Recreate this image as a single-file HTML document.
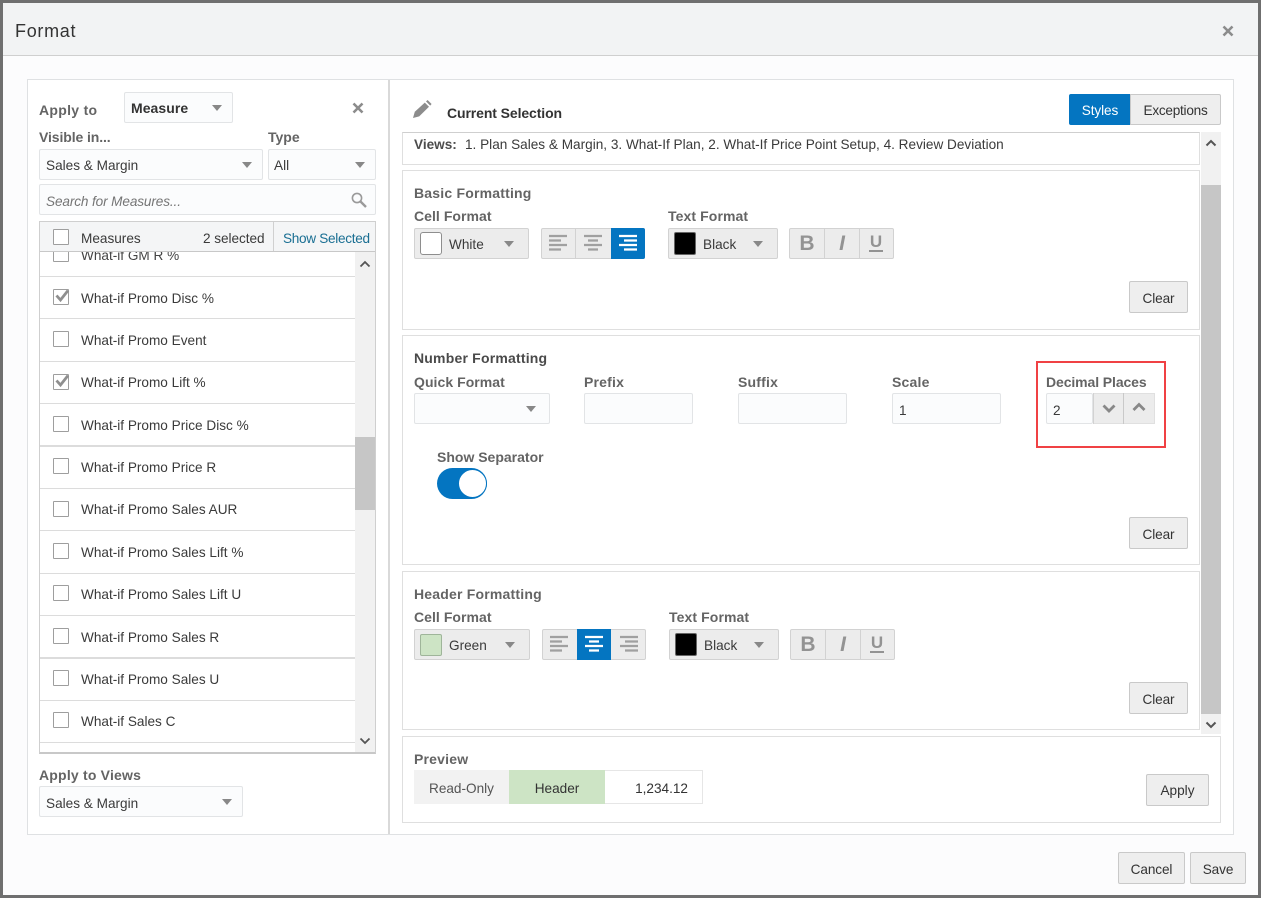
<!DOCTYPE html>
<html><head><meta charset="utf-8"><title>Format</title>
<style>
html,body{margin:0;padding:0}
body{width:1261px;height:898px;position:relative;overflow:hidden;background:#6f6f6f;font-family:"Liberation Sans",sans-serif;font-size:13.6px;color:#3a3a3a}
div,span.a{position:absolute;box-sizing:border-box}
svg{position:absolute;overflow:visible}
.t{white-space:nowrap;line-height:20px}
.b{font-weight:bold;color:#646464;font-size:14px;line-height:18px}
.box{background:#fff;border:1px solid #dfdfdf}
.sel{background:#fbfcfd;border:1px solid #e2e4e6;border-radius:2px}
.btn{background:#eeeeee;border:1px solid #c9c9c9;border-radius:2px;text-align:center;line-height:34px;color:#333;letter-spacing:-.1px}
.g{background:#ececec;border:1px solid #d2d2d2}
.row{left:40px;width:315px;height:1px;background:#dcdcdc}
.cb{left:53px;width:16px;height:16px;border:1px solid #9e9e9e;background:#fff;border-radius:1px}
.tri{width:0;height:0;border-left:5.5px solid transparent;border-right:5.5px solid transparent;border-top:6.5px solid #888;margin-left:.5px}
.B{font-weight:bold;font-size:21px;line-height:24px;color:#939393;width:18px;text-align:center}
.I{font-weight:bold;font-style:italic;font-size:21px;line-height:24px;color:#939393;width:18px;text-align:center}
.U{font-weight:bold;font-size:17px;line-height:20px;color:#939393;width:16px;text-align:center}
.ul{width:14px;height:2px;background:#939393}
</style></head><body>
<div style="left:3px;top:3px;width:1255px;height:892px;background:#fcfcfd"></div>
<div style="left:3px;top:3px;width:1255px;height:53px;background:#f2f3f4;border-bottom:1px solid #cfcfcf"></div>
<div class="t" style="left:15px;top:19px;font-size:18px;line-height:24px;color:#333;letter-spacing:.7px">Format</div>
<svg style="left:1222px;top:25px" width="12" height="12"><path d="M1.5 1.5L10.5 10.5M10.500 1.5L1.5 10.5" stroke="#8c8c8c" stroke-width="2.6"/></svg>

<div style="left:27px;top:79px;width:1207px;height:756px;background:#fff;border:1px solid #dfe1e3"></div>
<div style="left:388px;top:80px;width:2px;height:754px;background:#d9d9d9"></div>

<!-- left panel -->
<div class="t b" style="left:39px;top:101px;letter-spacing:.3px">Apply to</div>
<div class="sel" style="left:124px;top:92px;width:109px;height:31px"></div>
<div class="t" style="left:131px;top:99px;font-weight:bold;font-size:14px;line-height:18px;color:#333;letter-spacing:.05px">Measure</div>
<div class="tri" style="left:211px;top:105px"></div>
<svg style="left:352px;top:102px" width="12" height="12"><path d="M1.5 1.5L10.5 10.5M10.500 1.5L1.5 10.5" stroke="#8c8c8c" stroke-width="2.6"/></svg>
<div class="t b" style="left:39px;top:128px;letter-spacing:-.1px">Visible in...</div>
<div class="t b" style="left:268px;top:128px">Type</div>
<div class="sel" style="left:39px;top:149px;width:224px;height:31px"></div>
<div class="t" style="left:46px;top:156px">Sales &amp; Margin</div>
<div class="tri" style="left:241px;top:162px"></div>
<div class="sel" style="left:268px;top:149px;width:108px;height:31px"></div>
<div class="t" style="left:274px;top:156px">All</div>
<div class="tri" style="left:354px;top:162px"></div>
<div class="sel" style="left:39px;top:184px;width:337px;height:31px"></div>
<div class="t" style="left:46px;top:192px;font-style:italic;color:#757575;letter-spacing:-.12px">Search for Measures...</div>
<svg style="left:351px;top:192px" width="16" height="16"><circle cx="6" cy="6" r="4.6" fill="none" stroke="#9a9a9a" stroke-width="1.6"/><path d="M9.5 9.5L15 15" stroke="#9a9a9a" stroke-width="2.4"/></svg>

<div style="left:39px;top:221px;width:337px;height:533px;background:#fff;border:1px solid #cfcfcf;border-bottom:2px solid #c8c8c8"></div>
<div class="t" style="left:81px;top:246px;color:#444">What-if GM R %</div>
<div class="cb" style="top:246px"></div>
<div style="left:40px;top:222px;width:335px;height:30px;background:#f4f5f6;border-bottom:1px solid #c8c8c8"></div>
<div style="left:273px;top:222px;width:1px;height:29px;background:#d0d0d0"></div>
<div class="cb" style="top:229px"></div>
<div class="t" style="left:81px;top:229px">Measures</div>
<div class="t" style="left:203px;top:229px;letter-spacing:-.05px">2 selected</div>
<div class="t" style="left:283px;top:229px;color:#1a6f93;letter-spacing:-.3px">Show Selected</div>

<div class="row" style="top:276px"></div>
<div class="row" style="top:318px"></div>
<div class="row" style="top:361px"></div>
<div class="row" style="top:403px"></div>
<div class="row" style="top:445px;height:2px"></div>
<div class="row" style="top:488px"></div>
<div class="row" style="top:530px"></div>
<div class="row" style="top:573px"></div>
<div class="row" style="top:615px"></div>
<div class="row" style="top:657px;height:2px"></div>
<div class="row" style="top:700px"></div>
<div class="row" style="top:742px"></div>

<div class="cb" style="top:289px"></div><svg style="left:53px;top:287px" width="18" height="18"><path d="M3.5 8.500L7.500 13L15 3.500" fill="none" stroke="#8f8f8f" stroke-width="2.800"/></svg>
<div class="t" style="left:81px;top:289px">What-if Promo Disc %</div>
<div class="cb" style="top:331px"></div><div class="t" style="left:81px;top:331px">What-if Promo Event</div>
<div class="cb" style="top:374px"></div><svg style="left:53px;top:372px" width="18" height="18"><path d="M3.5 8.500L7.500 13L15 3.500" fill="none" stroke="#8f8f8f" stroke-width="2.800"/></svg>
<div class="t" style="left:81px;top:373px">What-if Promo Lift %</div>
<div class="cb" style="top:416px"></div><div class="t" style="left:81px;top:416px">What-if Promo Price Disc %</div>
<div class="cb" style="top:458px"></div><div class="t" style="left:81px;top:458px">What-if Promo Price R</div>
<div class="cb" style="top:501px"></div><div class="t" style="left:81px;top:500px">What-if Promo Sales AUR</div>
<div class="cb" style="top:543px"></div><div class="t" style="left:81px;top:543px">What-if Promo Sales Lift %</div>
<div class="cb" style="top:585px"></div><div class="t" style="left:81px;top:585px">What-if Promo Sales Lift U</div>
<div class="cb" style="top:628px"></div><div class="t" style="left:81px;top:628px">What-if Promo Sales R</div>
<div class="cb" style="top:670px"></div><div class="t" style="left:81px;top:670px">What-if Promo Sales U</div>
<div class="cb" style="top:712px"></div><div class="t" style="left:81px;top:712px">What-if Sales C</div>

<div style="left:355px;top:252px;width:20px;height:500px;background:#f1f1f1"></div>
<div style="left:355px;top:437px;width:20px;height:73px;background:#c6c6c6"></div>
<svg style="left:359px;top:260px" width="12" height="8"><path d="M1.5 6.5L6 2L10.500 6.5" fill="none" stroke="#555" stroke-width="1.8"/></svg>
<svg style="left:359px;top:737px" width="12" height="8"><path d="M1.5 1.5L6 6L10.500 1.5" fill="none" stroke="#555" stroke-width="1.8"/></svg>

<div class="t b" style="left:39px;top:766px;letter-spacing:.2px">Apply to Views</div>
<div class="sel" style="left:39px;top:786px;width:204px;height:31px"></div>
<div class="t" style="left:46px;top:794px">Sales &amp; Margin</div>
<div class="tri" style="left:221px;top:799px"></div>

<!-- right head -->
<svg style="left:412px;top:99px" width="20" height="20"><path d="M1 19L2.800 12.800L12.800 3.600L17 7.800L7.200 17.400Z" fill="#8c8c8c"/><path d="M14 2.400L15.600 1L19.600 5L18.200 6.600Z" fill="#8c8c8c"/></svg>
<div class="t" style="left:447px;top:104px;font-weight:bold;font-size:14px;line-height:18px;color:#333;letter-spacing:-.1px">Current Selection</div>
<div style="left:1069px;top:94px;width:62px;height:31px;background:#0475c1;color:#fff;text-align:center;line-height:33px;border-radius:2px 0 0 2px;letter-spacing:-.1px">Styles</div>
<div style="left:1130px;top:94px;width:91px;height:31px;background:#eeeeee;border:1px solid #c9c9c9;border-radius:0 2px 2px 0;color:#333;text-align:center;line-height:31px;letter-spacing:-.25px">Exceptions</div>

<!-- views -->
<div style="left:402px;top:132px;width:798px;height:33px;background:#fff;border:1px solid #dfdfdf;border-top:1px solid #cfcfcf"></div>
<div class="t" style="left:414px;top:135px;font-weight:bold;color:#4c4c4c">Views:</div>
<div class="t" style="left:465px;top:135px">1. Plan Sales &amp; Margin, 3. What-If Plan, 2. What-If Price Point Setup, 4. Review Deviation</div>

<!-- right scrollbar -->
<div style="left:1201px;top:132px;width:20px;height:602px;background:#f1f1f1"></div>
<div style="left:1201px;top:185px;width:20px;height:529px;background:#c6c6c6"></div>
<svg style="left:1205px;top:139px" width="12" height="8"><path d="M1.500 6.500L6 2L10.500 6.500" fill="none" stroke="#555" stroke-width="2"/></svg>
<svg style="left:1205px;top:721px" width="12" height="8"><path d="M1.500 1.500L6 6L10.500 1.500" fill="none" stroke="#555" stroke-width="2"/></svg>

<!-- basic -->
<div class="box" style="left:402px;top:170px;width:798px;height:160px"></div>
<div class="t b" style="left:414px;top:184px;letter-spacing:.2px">Basic Formatting</div>
<div class="t b" style="left:414px;top:207px;letter-spacing:.05px">Cell Format</div>
<div class="t b" style="left:668px;top:207px;letter-spacing:.1px">Text Format</div>
<div class="g" style="left:414px;top:228px;width:115px;height:31px;border-radius:2px"></div>
<div style="left:420px;top:232px;width:22px;height:23px;background:#fff;border:1px solid #8e8e8e;border-radius:3px"></div>
<div class="t" style="left:449px;top:235px">White</div>
<div class="tri" style="left:503px;top:241px"></div>
<div class="g" style="left:541px;top:228px;width:104px;height:31px;border-radius:2px"></div>
<div style="left:575px;top:229px;width:1px;height:29px;background:#d2d2d2"></div>
<div style="left:611px;top:228px;width:34px;height:31px;background:#0475c1;border-radius:0 2px 2px 0"></div>
<svg style="left:549px;top:235px" width="18" height="17"><path d="M0 1H18M0 5.500H12M0 10H18M0 14.500H12" stroke="#a0a0a0" stroke-width="2.200"/></svg>
<svg style="left:584px;top:235px" width="18" height="17"><path d="M0 1H18M4 5.500H14M0 10H18M4 14.500H14" stroke="#a0a0a0" stroke-width="2.200"/></svg>
<svg style="left:619px;top:235px" width="18" height="17"><path d="M0 1H18M5 5.500H18M0 10H18M5 14.500H18" stroke="#fff" stroke-width="2.200"/></svg>
<div class="g" style="left:668px;top:228px;width:110px;height:31px;border-radius:2px"></div>
<div style="left:674px;top:232px;width:22px;height:23px;background:#000;border:1px solid #666;border-radius:2px"></div>
<div class="t" style="left:703px;top:235px">Black</div>
<div class="tri" style="left:752px;top:241px"></div>
<div class="g" style="left:789px;top:228px;width:105px;height:31px;border-radius:2px"></div>
<div style="left:824px;top:229px;width:1px;height:29px;background:#d2d2d2"></div>
<div style="left:859px;top:229px;width:1px;height:29px;background:#d2d2d2"></div>
<div class="t B" style="left:798px;top:232px">B</div>
<div class="t I" style="left:833px;top:232px">I</div>
<div class="t U" style="left:868px;top:232px">U</div>
<div class="ul" style="left:869px;top:250px"></div>
<div class="btn" style="left:1129px;top:281px;width:59px;height:32px">Clear</div>

<!-- number -->
<div class="box" style="left:402px;top:335px;width:798px;height:230px"></div>
<div class="t" style="left:414px;top:349px;font-weight:bold;font-size:14px;line-height:18px;color:#4a4a4a;letter-spacing:.2px">Number Formatting</div>
<div class="t b" style="left:414px;top:373px;letter-spacing:.05px">Quick Format</div>
<div class="t b" style="left:584px;top:373px;letter-spacing:.2px">Prefix</div>
<div class="t b" style="left:738px;top:373px;letter-spacing:.2px">Suffix</div>
<div class="t b" style="left:892px;top:373px;letter-spacing:.2px">Scale</div>
<div class="t b" style="left:1046px;top:373px;letter-spacing:-.1px">Decimal Places</div>
<div class="sel" style="left:414px;top:393px;width:136px;height:31px"></div>
<div class="tri" style="left:525px;top:406px"></div>
<div class="sel" style="left:584px;top:393px;width:109px;height:31px"></div>
<div class="sel" style="left:738px;top:393px;width:109px;height:31px"></div>
<div class="sel" style="left:892px;top:393px;width:109px;height:31px"></div>
<div class="t" style="left:899px;top:401px">1</div>
<div class="sel" style="left:1046px;top:393px;width:47px;height:31px"></div>
<div class="t" style="left:1053px;top:401px">2</div>
<div style="left:1093px;top:393px;width:62px;height:31px;background:#ececec;border:1px solid #e0e0e0"></div>
<div style="left:1123px;top:393px;width:1px;height:31px;background:#c9c9c9"></div>
<div style="left:1093px;top:393px;width:1px;height:31px;background:#d2d2d2"></div>
<svg style="left:1102px;top:404px" width="14" height="10"><path d="M1.500 1.500L7 7L12.500 1.500" fill="none" stroke="#888" stroke-width="2.800"/></svg>
<svg style="left:1132px;top:402px" width="14" height="10"><path d="M1.500 8L7 2.500L12.500 8" fill="none" stroke="#888" stroke-width="2.800"/></svg>
<div style="left:1036px;top:361px;width:130px;height:87px;border:2.500px solid #f04144"></div>
<div class="t b" style="left:437px;top:448px">Show Separator</div>
<div style="left:437px;top:468px;width:50px;height:31px;background:#0475c1;border-radius:16px"></div>
<div style="left:458px;top:469px;width:29px;height:29px;background:#fff;border-radius:50%;border:1px solid #0475c1"></div>
<div class="btn" style="left:1129px;top:517px;width:59px;height:32px">Clear</div>

<!-- header -->
<div class="box" style="left:402px;top:571px;width:798px;height:159px"></div>
<div class="t b" style="left:414px;top:585px;letter-spacing:.2px">Header Formatting</div>
<div class="t b" style="left:414px;top:608px;letter-spacing:.05px">Cell Format</div>
<div class="t b" style="left:669px;top:608px;letter-spacing:.1px">Text Format</div>
<div class="g" style="left:414px;top:629px;width:116px;height:31px;border-radius:2px"></div>
<div style="left:420px;top:634px;width:22px;height:22px;background:#cde4c5;border:1px solid #9fb59a;border-radius:2px"></div>
<div class="t" style="left:449px;top:636px">Green</div>
<div class="tri" style="left:504px;top:642px"></div>
<div class="g" style="left:542px;top:629px;width:104px;height:31px;border-radius:2px"></div>
<div style="left:577px;top:629px;width:34px;height:31px;background:#0475c1"></div>
<svg style="left:550px;top:636px" width="18" height="17"><path d="M0 1H18M0 5.500H12M0 10H18M0 14.500H12" stroke="#a0a0a0" stroke-width="2.200"/></svg>
<svg style="left:585px;top:636px" width="18" height="17"><path d="M0 1H18M4 5.500H14M0 10H18M4 14.500H14" stroke="#fff" stroke-width="2.200"/></svg>
<svg style="left:620px;top:636px" width="18" height="17"><path d="M0 1H18M5 5.500H18M0 10H18M5 14.500H18" stroke="#a0a0a0" stroke-width="2.200"/></svg>
<div class="g" style="left:669px;top:629px;width:110px;height:31px;border-radius:2px"></div>
<div style="left:675px;top:633px;width:22px;height:23px;background:#000;border:1px solid #666;border-radius:2px"></div>
<div class="t" style="left:704px;top:636px">Black</div>
<div class="tri" style="left:753px;top:642px"></div>
<div class="g" style="left:790px;top:629px;width:105px;height:31px;border-radius:2px"></div>
<div style="left:825px;top:630px;width:1px;height:29px;background:#d2d2d2"></div>
<div style="left:860px;top:630px;width:1px;height:29px;background:#d2d2d2"></div>
<div class="t B" style="left:799px;top:633px">B</div>
<div class="t I" style="left:834px;top:633px">I</div>
<div class="t U" style="left:869px;top:633px">U</div>
<div class="ul" style="left:870px;top:651px"></div>
<div class="btn" style="left:1129px;top:682px;width:59px;height:32px">Clear</div>

<!-- preview -->
<div class="box" style="left:402px;top:736px;width:819px;height:87px"></div>
<div class="t b" style="left:414px;top:750px;letter-spacing:.2px">Preview</div>
<div style="left:414px;top:770px;width:95px;height:34px;background:#f2f2f2;text-align:center;line-height:37px;color:#555">Read-Only</div>
<div style="left:509px;top:770px;width:96px;height:34px;background:#cde4c5;text-align:center;line-height:37px;color:#333">Header</div>
<div style="left:605px;top:770px;width:98px;height:34px;background:#fff;border:1px solid #e6e6e6;border-left:0;text-align:right;padding-right:14px;line-height:35px;color:#333">1,234.12</div>
<div class="btn" style="left:1146px;top:774px;width:63px;height:32px;line-height:31px;letter-spacing:0">Apply</div>

<div class="btn" style="left:1118px;top:852px;width:67px;height:32px">Cancel</div>
<div class="btn" style="left:1190px;top:852px;width:56px;height:32px">Save</div>
</body></html>
